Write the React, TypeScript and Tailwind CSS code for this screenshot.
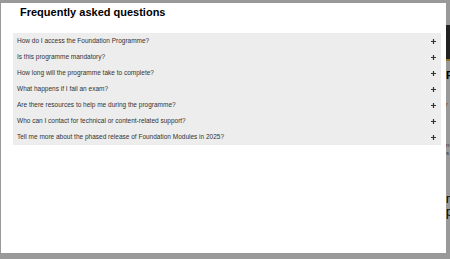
import React from "react";

const questions = [
  "How do I access the Foundation Programme?",
  "Is this programme mandatory?",
  "How long will the programme take to complete?",
  "What happens if I fail an exam?",
  "Are there resources to help me during the programme?",
  "Who can I contact for technical or content-related support?",
  "Tell me more about the phased release of Foundation Modules in 2025?",
];

const PlusIcon: React.FC = () => (
  <svg width="5" height="5" viewBox="0 0 5 5" className="shrink-0">
    <path d="M2.5 0v5M0 2.5h5" stroke="#333" strokeWidth="1.2" />
  </svg>
);

export default function App() {
  return (
    <div
      className="relative w-[450px] h-[259px] overflow-hidden bg-white"
      style={{ fontFamily: '"Liberation Sans", Arial, sans-serif' }}
    >
      {/* page behind the modal */}
      <div className="flex h-full">
        <div className="w-[446px] shrink-0" />
        <div className="flex flex-col w-[40px]">
          <div className="mt-[25px] h-[36px] bg-[#3a3a3a] border-b-2 border-[#f0c040]" />
          <div className="mt-[8px] text-[11px] font-bold leading-[12px] text-black">F</div>
          <div className="mt-[20px] text-[6px] leading-[7px] text-[#e07030]">r</div>
          <div className="mt-[34px] text-[6px] leading-[7px] text-[#555]">n</div>
          <div className="mt-[1px] text-[6px] leading-[7px] text-[#4060c0]">s</div>
          <div className="mt-[36px] text-[12px] leading-[13px] text-black">
            n<br />p
          </div>
        </div>
      </div>

      {/* overlay */}
      <div className="absolute inset-0 bg-black/40" />

      {/* modal */}
      <div className="absolute left-[1px] top-[3px] w-[445px] h-[250px] bg-white">
        <h2 className="pl-[19px] pt-[2px] text-[11px] font-bold leading-[14px] text-black">
          Frequently asked questions
        </h2>
        <div className="ml-[12px] mr-[5px] mt-[14px] bg-[#ededed]">
          {questions.map((q) => (
            <div
              key={q}
              className="flex items-center justify-between h-[16px] pl-[4px] pr-[5px] text-[6.5px] text-[#333]"
            >
              <span>{q}</span>
              <PlusIcon />
            </div>
          ))}
        </div>
      </div>
    </div>
  );
}
